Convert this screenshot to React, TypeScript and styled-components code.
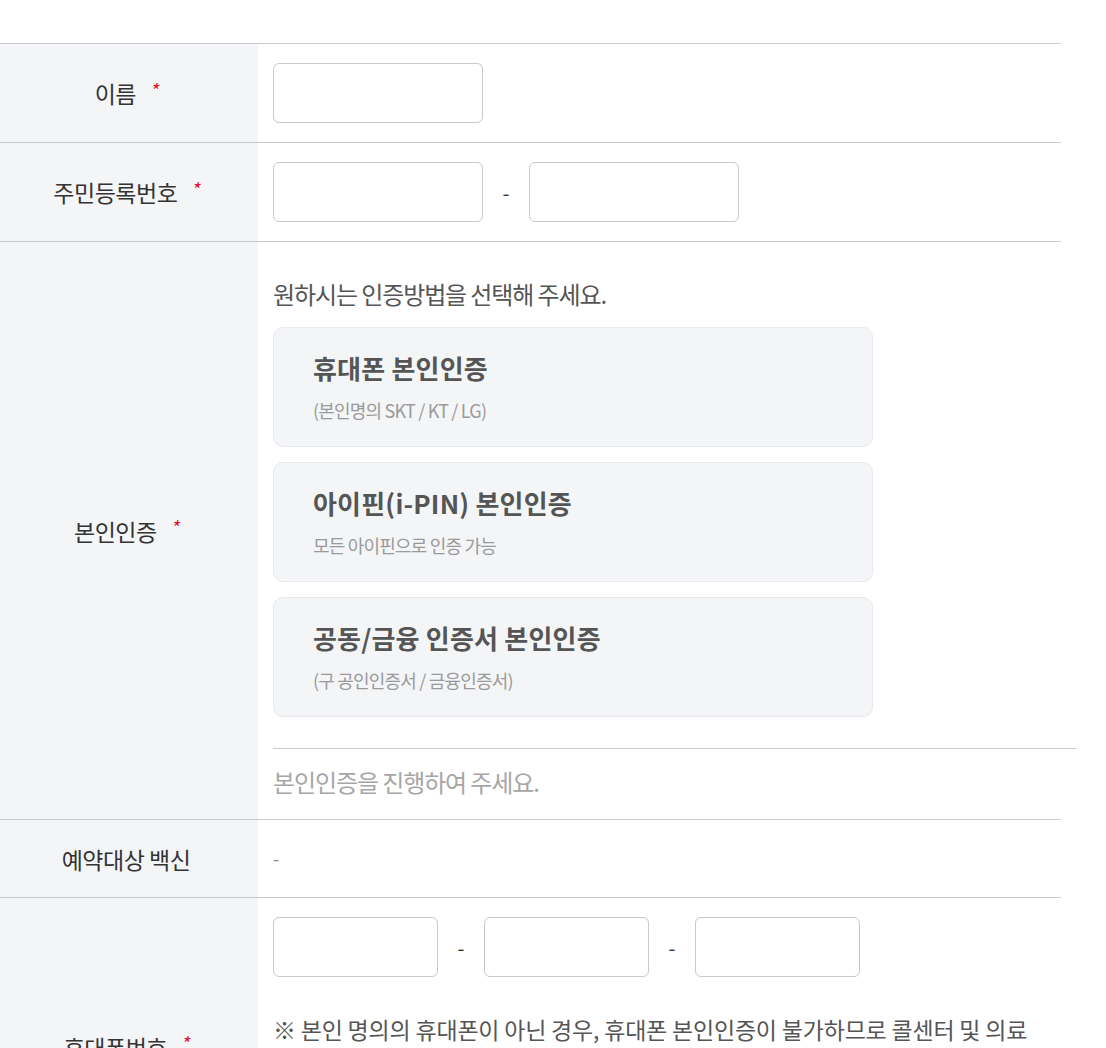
import React from "react";
import styled, { createGlobalStyle } from "styled-components";

const Global = createGlobalStyle`
  html, body { margin: 0; padding: 0; background: #fff; }
  body {
    font-family: "Noto Sans CJK KR", "Noto Sans", sans-serif;
    color: #333;
  }
  * { box-sizing: border-box; }
`;

const Page = styled.div`
  padding-top: 43px;
  width: 1061px;
`;

const Table = styled.div`
  border-top: 1px solid #c9c9cf;
`;

const Row = styled.div`
  display: grid;
  grid-template-columns: 258px 1fr;
  border-bottom: 1px solid #c9c9cf;
`;

const Th = styled.div`
  background: #f4f5f7;
  display: flex;
  align-items: center;
  justify-content: center;
  font-size: 23px;
  color: #333;
  letter-spacing: -0.5px;
  padding-right: 6px;
`;

const Star = styled.span`
  color: #e4102a;
  font-size: 19px;
  font-style: italic;
  margin-left: 13px;
  position: relative;
  top: -4px;
`;

const Td = styled.div<{ $pt?: number; $pb?: number }>`
  padding: ${(p) => p.$pt ?? 19}px 0 ${(p) => p.$pb ?? 19}px 15px;
  display: flex;
  flex-direction: column;
  align-items: flex-start;
`;

const InputRow = styled.div`
  display: flex;
  align-items: center;
`;

const Input = styled.input<{ $w: number }>`
  width: ${(p) => p.$w}px;
  height: 60px;
  border: 1px solid #c8c8cd;
  border-radius: 6px;
  background: #fff;
  outline: none;
  padding: 0 12px;
  font-size: 18px;
  font-family: inherit;
`;

const Dash = styled.span`
  width: 46px;
  text-align: center;
  font-size: 20px;
  color: #333;
`;

const Guide = styled.p`
  margin: 0;
  font-size: 24px;
  line-height: 36px;
  color: #555;
  letter-spacing: -1.1px;
`;

const Cards = styled.div`
  display: flex;
  flex-direction: column;
  gap: 15px;
  margin-top: 15px;
`;

const Card = styled.button`
  width: 600px;
  height: 120px;
  background: #f4f5f7;
  border: 1px solid #e7e9ee;
  border-radius: 10px;
  padding: 0 0 2px 39px;
  text-align: left;
  display: flex;
  flex-direction: column;
  justify-content: center;
  cursor: pointer;
  font-family: inherit;
`;

const CardTitle = styled.span`
  font-size: 26px;
  font-weight: 700;
  color: #555;
  letter-spacing: 0.2px;
  line-height: 34px;
`;

const CardSub = styled.span`
  font-size: 18px;
  color: #9a9a9a;
  letter-spacing: -0.8px;
  line-height: 24px;
  margin-top: 13px;
`;

const Divider = styled.div`
  width: 803px;
  height: 1px;
  background: #c9c9cf;
  margin-top: 31px;
`;

const Status = styled.p`
  margin: 15px 0 0;
  font-size: 24px;
  line-height: 36px;
  color: #a6a6a6;
  letter-spacing: -1.1px;
`;

const Plain = styled.span`
  font-size: 18px;
  line-height: 39px;
  color: #888;
`;

const Notice = styled.p`
  margin: 34px 0 0;
  font-size: 23px;
  line-height: 36px;
  color: #555;
  letter-spacing: -0.2px;
  width: 770px;
`;

const methods = [
  { title: "휴대폰 본인인증", sub: "(본인명의 SKT / KT / LG)" },
  { title: "아이핀(i-PIN) 본인인증", sub: "모든 아이핀으로 인증 가능" },
  { title: "공동/금융 인증서 본인인증", sub: "(구 공인인증서 / 금융인증서)" },
];

const Label = ({ text, req }: { text: string; req?: boolean }) => (
  <Th>
    {text}
    {req && <Star>*</Star>}
  </Th>
);

export default function App() {
  return (
    <Page>
      <Global />
      <Table>
        <Row>
          <Label text="이름" req />
          <Td>
            <Input $w={210} />
          </Td>
        </Row>
        <Row>
          <Label text="주민등록번호" req />
          <Td>
            <InputRow>
              <Input $w={210} />
              <Dash>-</Dash>
              <Input $w={210} />
            </InputRow>
          </Td>
        </Row>
        <Row>
          <Label text="본인인증" req />
          <Td $pt={34} $pb={19}>
            <Guide>원하시는 인증방법을 선택해 주세요.</Guide>
            <Cards>
              {methods.map((m) => (
                <Card key={m.title} type="button">
                  <CardTitle>{m.title}</CardTitle>
                  <CardSub>{m.sub}</CardSub>
                </Card>
              ))}
            </Cards>
            <Divider />
            <Status>본인인증을 진행하여 주세요.</Status>
          </Td>
        </Row>
        <Row>
          <Label text="예약대상 백신" />
          <Td>
            <Plain>-</Plain>
          </Td>
        </Row>
        <Row>
          <Label text="휴대폰번호" req />
          <Td $pb={76}>
            <InputRow>
              <Input $w={165} />
              <Dash>-</Dash>
              <Input $w={165} />
              <Dash>-</Dash>
              <Input $w={165} />
            </InputRow>
            <Notice>
              ※ 본인 명의의 휴대폰이 아닌 경우, 휴대폰 본인인증이 불가하므로 콜센터 및 의료
              기관을 통해 예약해 주시기 바랍니다. 예약 완료 후 예약 내역은 입력하신
              휴대폰번호로 안내됩니다.
            </Notice>
          </Td>
        </Row>
      </Table>
    </Page>
  );
}
